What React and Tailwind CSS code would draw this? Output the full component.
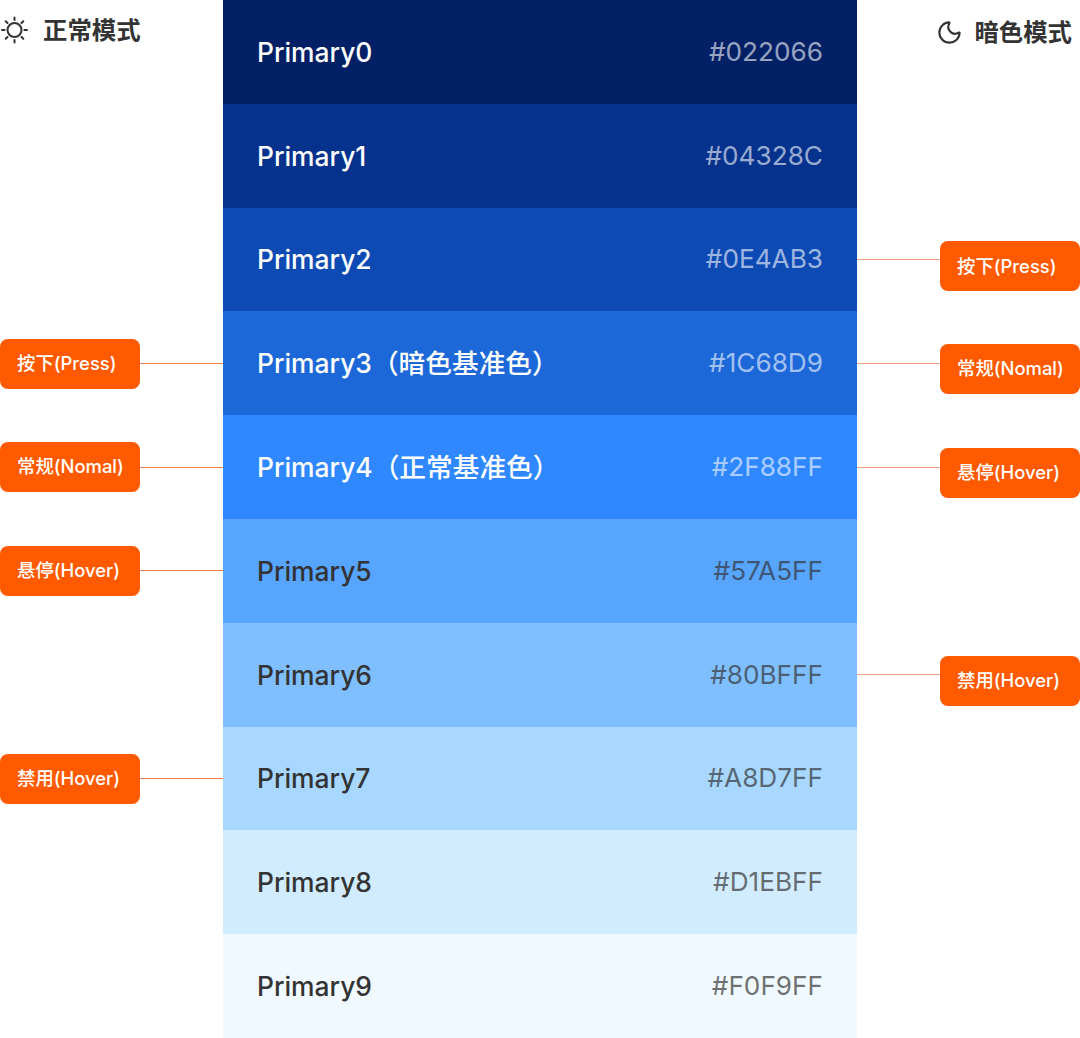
import React from 'react';
import { Moon } from 'lucide-react';

const rows = [
  { name: 'Primary0', hex: '#022066', bg: 'bg-[#022066]', dark: true },
  { name: 'Primary1', hex: '#04328C', bg: 'bg-[#04328C]', dark: true },
  { name: 'Primary2', hex: '#0E4AB3', bg: 'bg-[#0E4AB3]', dark: true, right: '按下(Press)', rightTag: 'mt-[14px]' },
  { name: 'Primary3（暗色基准色）', hex: '#1C68D9', bg: 'bg-[#1C68D9]', dark: true, left: '按下(Press)', leftTag: 'mt-[2px]', right: '常规(Nomal)' },
  { name: 'Primary4（正常基准色）', hex: '#2F88FF', bg: 'bg-[#2F88FF]', dark: true, left: '常规(Nomal)', right: '悬停(Hover)' },
  { name: 'Primary5', hex: '#57A5FF', bg: 'bg-[#57A5FF]', left: '悬停(Hover)' },
  { name: 'Primary6', hex: '#80BFFF', bg: 'bg-[#80BFFF]', right: '禁用(Hover)' },
  { name: 'Primary7', hex: '#A8D7FF', bg: 'bg-[#A8D7FF]', left: '禁用(Hover)', leftTag: 'mt-[1px]' },
  { name: 'Primary8', hex: '#D1EBFF', bg: 'bg-[#D1EBFF]' },
  { name: 'Primary9', hex: '#F0F9FF', bg: 'bg-[#F0F9FF]' },
];

const SunIcon = () => (
  <svg width="30" height="30" viewBox="0 0 30 30" fill="none" stroke="currentColor" strokeWidth="2" strokeLinecap="round" className="shrink-0">
    <circle cx="14.5" cy="15" r="7" />
    <path d="M14.5 2.5v2.6M14.5 24.9v2.6M2 15h2.6M24.4 15H27M5.7 6.2l1.8 1.8M21.5 22l1.8 1.8M5.7 23.8l1.8-1.8M21.5 8l1.8-1.8" />
  </svg>
);

const Tag = ({ label, className = '' }) => (
  <div className={`w-[140px] h-[50px] shrink-0 bg-[#FF5A00] rounded-lg flex items-center pl-[17px] text-white text-[18.4px] font-medium ${className}`}>
    {label}
  </div>
);

const Name = ({ text, dark }) => {
  const cut = text.indexOf('（');
  const color = dark ? 'text-white' : 'text-[#333333]';
  if (cut < 0) return <span className={`text-[26.4px] leading-[40px] font-medium ${color}`}>{text}</span>;
  return (
    <span className={`text-[26.4px] leading-[40px] font-medium ${color}`}>
      {text.slice(0, cut)}
      <span className="text-[26.7px] leading-none">{text.slice(cut)}</span>
    </span>
  );
};

const Row = ({ row }) => (
  <div className="grid grid-cols-[223px_634px_223px] min-h-0">
    {/* left label */}
    <div className="flex items-center">
      {row.left && (
        <>
          <Tag label={row.left} className={row.leftTag} />
          <div className="flex-1 h-px bg-[#EE7F4F]" />
        </>
      )}
    </div>

    {/* swatch */}
    <div className={`${row.bg} flex items-center justify-between pl-[34px] pr-[34px]`}>
      <Name text={row.name} dark={row.dark} />
      <span className={`text-[26.2px] leading-[40px] ${row.dark ? 'text-white/60' : 'text-[#333333]/70'}`}>{row.hex}</span>
    </div>

    {/* right label */}
    <div className="flex items-center">
      {row.right && (
        <>
          <div className="flex-1 h-px bg-[#F5A080]" />
          <Tag label={row.right} className={row.rightTag || 'mt-[12px]'} />
        </>
      )}
    </div>
  </div>
);

const App = () => {
  return (
    <div className="relative w-[1080px] h-[1038px] bg-white overflow-hidden font-['Inter','Noto_Sans_CJK_SC',sans-serif]">
      <div className="grid grid-rows-10 h-full">
        {rows.map((row) => (
          <Row key={row.name} row={row} />
        ))}
      </div>

      {/* mode headers sit over the empty side columns */}
      <div className="absolute left-0 top-[15px] flex items-center gap-[13px] text-[#333333] text-[24.4px] leading-[30px] font-bold">
        <SunIcon />
        <span>正常模式</span>
      </div>
      <div className="absolute right-[8px] top-[17px] flex items-center gap-[11px] text-[#333333] text-[24.4px] leading-[30px] font-bold">
        <Moon className="w-[27px] h-[27px]" strokeWidth={1.9} />
        <span>暗色模式</span>
      </div>
    </div>
  );
};

export default App;
